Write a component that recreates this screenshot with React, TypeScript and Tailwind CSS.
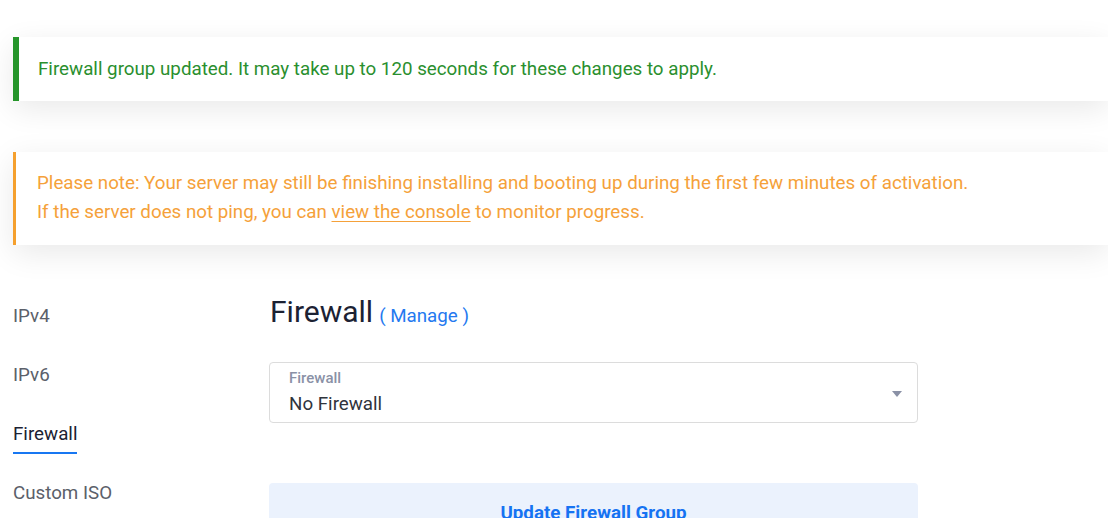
import React from "react";

export default function App() {
  const font = { fontFamily: "Roboto, 'Noto Sans', Arial, sans-serif" };
  return (
    <div className="min-h-[518px] w-full overflow-hidden bg-white" style={font}>
      <div className="pl-[13px] pt-[37px]">
        <div className="flex h-[64px] items-center border-l-[6px] border-[#25952a] bg-white pl-[19px] shadow-[0_8px_30px_rgba(0,0,0,0.09)]">
          <p className="text-[18.75px] leading-[29px] text-[#2a8f2e]">
            Firewall group updated. It may take up to 120 seconds for these changes to apply.
          </p>
        </div>
        <div className="mt-[51px] border-l-[3px] border-[#f5a02e] bg-white pb-[18px] pl-[21px] pt-[17px] shadow-[0_8px_30px_rgba(0,0,0,0.09)]">
          <p className="text-[18.75px] leading-[29px] text-[#f5a13a]">
            Please note: Your server may still be finishing installing and booting up during the first few minutes of activation.
          </p>
          <p className="text-[18.75px] leading-[29px] text-[#f5a13a]">
            If the server does not ping, you can{" "}
            <span className="underline decoration-[#f5a13a] decoration-1 underline-offset-[3px]">view the console</span> to monitor progress.
          </p>
        </div>
        <div className="mt-[47px] flex">
          <ul className="w-[256px] shrink-0 pt-[10px]">
            <li className="h-[59px] text-[18.75px] leading-[28px] text-[#5b606a]">IPv4</li>
            <li className="h-[59px] text-[18.75px] leading-[28px] text-[#5b606a]">IPv6</li>
            <li className="h-[59px]">
              <span className="inline-block border-b-2 border-[#1877f2] pb-[4px] text-[18.75px] leading-[28px] text-[#1c2233]">
                Firewall
              </span>
            </li>
            <li className="h-[59px] text-[18.75px] leading-[28px] text-[#5b606a]">Custom ISO</li>
          </ul>
          <div className="w-[649px] shrink-0">
            <div className="flex h-[40px] items-baseline pl-[1px]">
              <h2 className="text-[30px] leading-[40px] text-[#1c2233]">Firewall</h2>
              <a className="ml-[6px] text-[18.75px] text-[#2479f0]">( Manage )</a>
            </div>
            <div className="relative mt-[30px] h-[61px] rounded-[4px] border border-[#dcdcdc] pl-[19px] pt-[6px]">
              <div className="text-[15px] font-medium leading-[18px] text-[#8a91a6]">Firewall</div>
              <div className="mt-[4px] text-[18.75px] leading-[26px] text-[#30343c]">No Firewall</div>
              <svg className="absolute right-[15px] top-[28px]" width="10" height="6" viewBox="0 0 10 6">
                <path d="M0 0 L10 0 L5 6 Z" fill="#8a91a6" />
              </svg>
            </div>
            <div className="mt-[60px] flex h-[58px] justify-center rounded-[4px] bg-[#ebf2fd] pt-[18px]">
              <span className="text-[18.75px] font-bold leading-[24px] text-[#1673f2]">Update Firewall Group</span>
            </div>
          </div>
        </div>
      </div>
    </div>
  );
}
